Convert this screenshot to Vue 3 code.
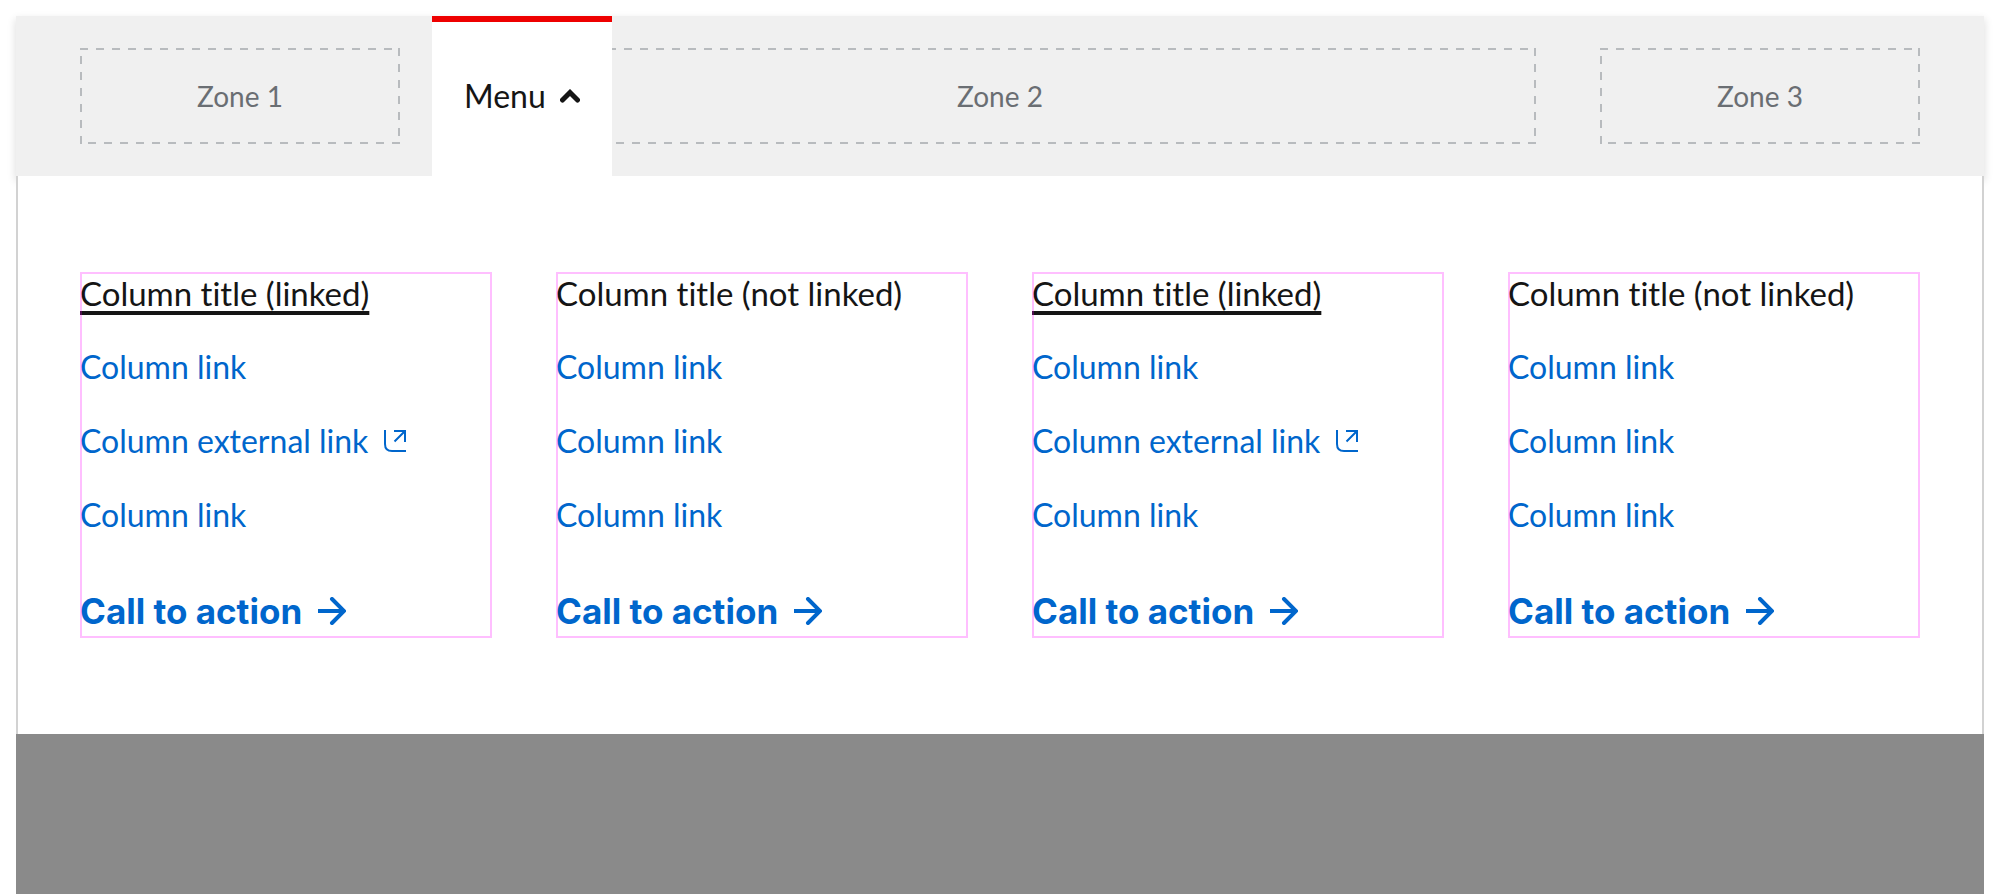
<script setup>
import { ref } from 'vue'

const open = ref(true)

const linkedColumn = {
  title: 'Column title (linked)',
  linked: true,
  links: [
    { label: 'Column link' },
    { label: 'Column external link', external: true },
    { label: 'Column link' }
  ]
}
const plainColumn = {
  title: 'Column title (not linked)',
  linked: false,
  links: [{ label: 'Column link' }, { label: 'Column link' }, { label: 'Column link' }]
}
const columns = [linkedColumn, plainColumn, linkedColumn, plainColumn]
</script>

<template>
  <div class="page">
    <header class="bar">
      <div class="zone">Zone 1</div>
      <div class="zone">Zone 2</div>
      <div class="zone">Zone 3</div>
      <button class="menu" type="button" :aria-expanded="open" aria-controls="mega-menu" @click="open = !open">
        <span>Menu</span>
        <svg class="chevron" viewBox="0 0 20 14" aria-hidden="true">
          <path d="M2.5 11 10 3.5 17.5 11" />
        </svg>
      </button>
    </header>

    <nav v-show="open" id="mega-menu" class="panel" aria-label="Menu">
      <section v-for="(column, i) in columns" :key="i" class="column">
        <h2 class="title">
          <a v-if="column.linked" class="title-link" href="#">{{ column.title }}</a>
          <template v-else>{{ column.title }}</template>
        </h2>
        <ul class="links">
          <li v-for="(link, j) in column.links" :key="j">
            <a class="link" href="#">
              <span>{{ link.label }}</span>
              <svg v-if="link.external" class="external" viewBox="0 0 22 22" aria-hidden="true">
                <path d="M1 0V14Q1 21 8 21H22M10 1H21V12M21 1 10.5 11.5" />
              </svg>
            </a>
          </li>
        </ul>
        <a class="cta" href="#">
          <span>Call to action</span>
          <svg class="arrow" viewBox="0 0 28 28" aria-hidden="true">
            <path d="M0 14H25" />
            <path d="M14 2 26 14 14 26" stroke-linecap="round" />
          </svg>
        </a>
      </section>
    </nav>

    <div class="overlay"></div>
  </div>
</template>

<style>
body {
  background: #fff;
}
</style>

<style scoped>
.page {
  box-sizing: border-box;
  display: flex;
  flex-direction: column;
  min-height: 100vh;
  padding: 16px 16px 0;
  color: #151515;
  font-family: Lato, "Open Sans", sans-serif;
  font-size: 32px;
  font-weight: 400;
  font-variant-ligatures: none;
  line-height: 42px;
}

.bar {
  position: relative;
  display: grid;
  grid-template-columns: 320px 1fr 320px;
  gap: 64px;
  padding: 32px 64px;
  background: #f0f0f0;
  box-shadow: 0 4px 8px 1px rgba(3, 3, 3, 0.12);
}

/* Dashes run clockwise round the box, 8px on and 8px off. */
.zone {
  --dash: #b8bbbe 0 8px, transparent 8px 16px;
  display: flex;
  align-items: center;
  justify-content: center;
  height: 96px;
  color: #6a6e73;
  font-size: 28px;
  background:
    repeating-linear-gradient(to right, var(--dash)) top / 100% 2px no-repeat,
    repeating-linear-gradient(to bottom, var(--dash)) right / 2px 100% no-repeat,
    repeating-linear-gradient(to left, var(--dash)) bottom / 100% 2px no-repeat,
    repeating-linear-gradient(to top, var(--dash)) left / 2px 100% no-repeat;
}

/* The open tab lies over the edge of the middle zone. */
.menu {
  position: absolute;
  top: 0;
  bottom: 0;
  left: 416px;
  display: flex;
  align-items: center;
  gap: 14px;
  padding: 0 32px;
  border: 0;
  background: #fff;
  box-shadow: inset 0 6px #e00;
  color: #151515;
  font: inherit;
  cursor: pointer;
}

svg {
  flex: none;
  fill: none;
  stroke: currentColor;
}

.chevron {
  width: 20px;
  height: 14px;
  stroke-width: 5px;
  stroke-linecap: round;
}

.panel {
  position: relative;
  display: grid;
  grid-template-columns: repeat(4, 1fr);
  gap: 64px;
  padding: 96px 62px;
  border: solid #d2d2d2;
  border-width: 0 2px;
  background: #fff;
}

.column {
  outline: 2px solid rgba(255, 0, 255, 0.25);
  outline-offset: -2px;
}

.title {
  margin: 0 0 32px;
  font-size: 33px;
  font-weight: 400;
}

.title-link {
  color: inherit;
  text-decoration: underline 4px;
  text-underline-offset: 5px;
}

.links {
  display: grid;
  gap: 32px;
  margin: 0 0 48px;
  padding: 0;
  list-style: none;
}

.link,
.cta {
  display: flex;
  align-items: center;
  gap: 16px;
  color: #06c;
  text-decoration: none;
}

.external {
  width: 22px;
  height: 22px;
  stroke-width: 2px;
}

.cta {
  font-family: Inter, "Open Sans", sans-serif;
  font-size: 35px;
  font-weight: 700;
  line-height: 54px;
}

.arrow {
  width: 28px;
  height: 28px;
  stroke-width: 4px;
}

.overlay {
  flex: 1;
  background: #8a8a8a;
}
</style>
